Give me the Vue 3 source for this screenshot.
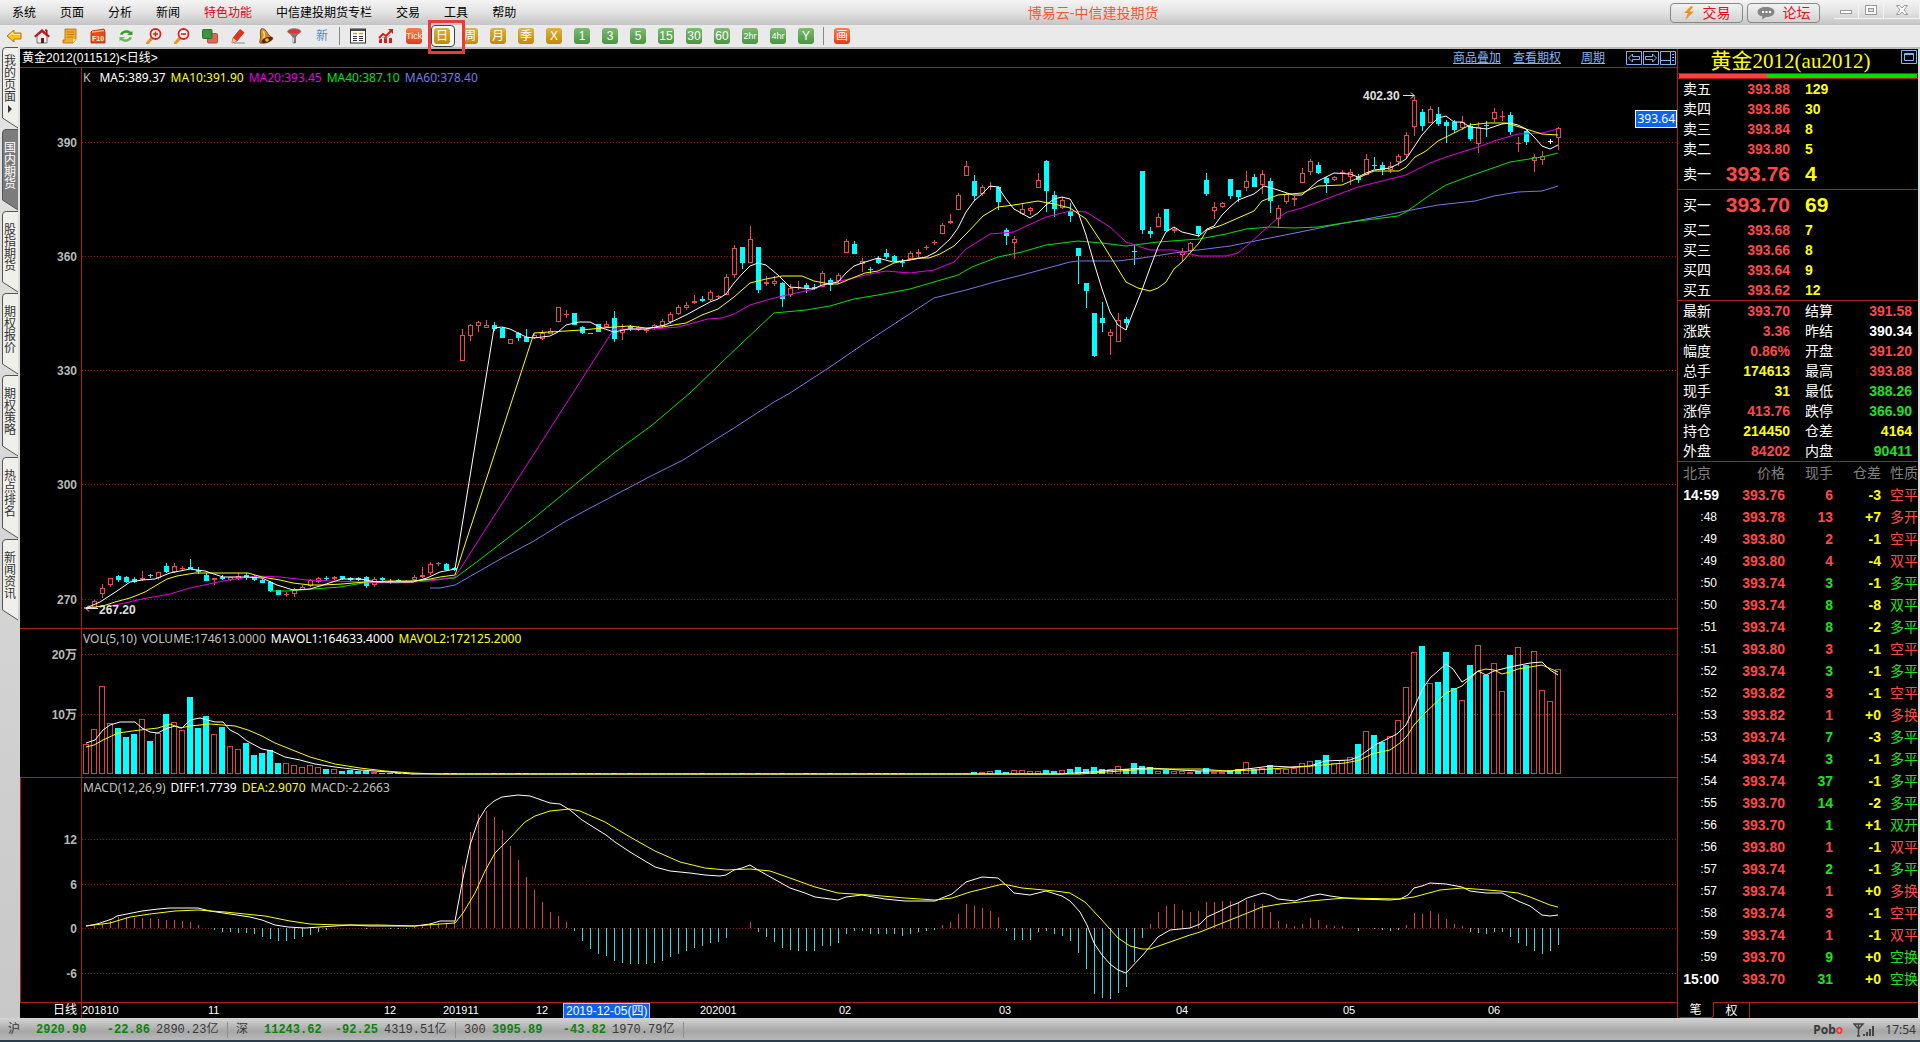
<script setup>
const menus = ['系统', '页面', '分析', '新闻', '特色功能', '中信建投期货专栏', '交易', '工具', '帮助']

const glyphs = {
  back: '<path d="M1 8 8 2v3h7v6H8v3z" fill="#fbc21e" stroke="#b07a10" stroke-width="1"/><path d="M3 8 7 4.500v2h7" fill="none" stroke="#fff0a0"/>',
  home: '<path d="M3 8v7h10V8L8 4z" fill="#f4ece6" stroke="#555" stroke-width=".8"/><path d="M11 2h2v4" fill="#8a1010" stroke="#8a1010"/><path d="M0 8 8 1l8 7-1.500 1.500L8 4 1.500 9.500z" fill="#c41420"/><path d="M7 10h3v5H7z" fill="#5a2020"/>',
  note: '<path d="M3 1h11v10l-3 4H1V12h2z" fill="#f0ac28" stroke="#a86c10" stroke-width=".8"/><path d="M5 4h7M5 6.500h7M5 9h6" stroke="#c07c10"/><path d="M11 15v-4h3z" fill="#fde08c"/>',
  f10: '<path d="M2 3 14 1l1 3v11H1V4z" fill="#e84c18" stroke="#a02808" stroke-width=".8"/><path d="M2 4 14 2.500" stroke="#ffb070" stroke-width="1.500"/><text x="8" y="12.500" font-size="7" font-weight="700" font-family="Liberation Sans, sans-serif" text-anchor="middle" fill="#fff0d0">F10</text>',
  refresh: '<path d="M2 6.500C3 2.500 10 .5 13 4l1.500-1v4H9l2-1.500C9 4 5.500 4.500 4.500 7z" fill="#3d9c30"/><path d="M14 9.500c-1 4-8 6-11 2.500l-1.500 1V9H7l-2 1.500c2 1.500 5.500 1 6.500-1.500z" fill="#6fb850"/>',
  zoomin: '<path d="m6 10-4.500 5" stroke="#e09a20" stroke-width="3" stroke-linecap="round"/><circle cx="9.500" cy="6" r="5" fill="#fff3f0" stroke="#d8201c" stroke-width="1.800"/><path d="M7 6h5M9.500 3.500v5" stroke="#d8201c" stroke-width="1.600"/>',
  zoomout: '<path d="m6 10-4.500 5" stroke="#e09a20" stroke-width="3" stroke-linecap="round"/><circle cx="9.500" cy="6" r="5" fill="#fff3f0" stroke="#d8201c" stroke-width="1.800"/><path d="M7 6h5" stroke="#d8201c" stroke-width="1.600"/>',
  copy: '<rect x="5.500" y="5.500" width="10" height="9.500" rx="1" fill="#e06858" stroke="#c84838"/><rect x=".5" y="1.500" width="9.500" height="9" rx="1" fill="#3c9440" stroke="#2a6e2c"/>',
  pencil: '<path d="m3 10 7-8.500 4 3L7 13l-5 2z" fill="#e83020" stroke="#9c1008" stroke-width=".6"/><path d="m3 10 4 3-5 2z" fill="#f4c890"/><path d="M4 15h11" stroke="#888"/>',
  bell: '<path d="M3 1c3-1 5 1 7 5 1.500 2 3 3 5 4-1 3-7 6-13 5-1-2 1-4 .5-7C2.500 5 2 3 3 1z" fill="#d88c28" stroke="#6a3808" stroke-width=".8"/><ellipse cx="9" cy="12" rx="5.800" ry="2.600" transform="rotate(-20 9 12)" fill="#5c2808"/><circle cx="9" cy="12" r="1.800" fill="#f8c040"/><path d="M5 3c2 2 1.500 4 1 7" stroke="#ffdf80" fill="none" stroke-width="1.500"/>',
  funnel: '<path d="M2 3 7 9v6h2.500V9l5-6z" fill="#777" stroke="#555" stroke-width=".6"/><ellipse cx="8.200" cy="3.500" rx="6.500" ry="2.800" fill="#e03038" stroke="#888"/><path d="M7.500 9.500v5" stroke="#ddd"/>',
  table: '<rect x=".5" y="1" width="15" height="14" fill="#fff" stroke="#333"/><path d="M1 2h14" stroke="#4a4a4a" stroke-width="2"/><path d="M3 5.500h4M9 5.500h4" stroke="#d0a010" stroke-width="1.500"/><path d="M3 8.500h4M9 8.500h4M3 10.500h4M9 10.500h4M3 12.500h4M9 12.500h4" stroke="#333"/>',
  chart: '<path d="M1 15v-4h3v4zM6 15V9h3v6zM11 15v-5h3v5z" fill="#d81c10"/><path d="M1 10 5 6l3 2 6-6" fill="none" stroke="#d81c10" stroke-width="2"/><path d="M10 1h5v5z" fill="#d81c10"/><path d="M1 12l4-3 3 1.500 5-4" stroke="#50a8e0" fill="none" stroke-width=".8"/>'
}
const tools = [
  ...['back', 'home', 'note', 'f10', 'refresh', 'zoomin', 'zoomout', 'copy', 'pencil', 'bell', 'funnel'].map(g => ({ g })),
  { t: '新', c: 'plain' }, { sep: 1 }, { g: 'table' }, { g: 'chart' }, { t: 'Tick', c: 'orange slim' },
  ...['日', '周', '月', '季', 'X'].map(t => ({ t, c: 'gold', on: t === '日' })),
  ...['1', '3', '5', '15', '30', '60', '2hr', '4hr', 'Y'].map(t => ({ t, c: t.length > 2 ? 'green slim' : 'green' })),
  { sep: 1 }, { t: '画', c: 'orange' }
]

const sideTabs = ['我的页面', '国内期货', '股指期货', '期权报价', '期权策略', '热点排名', '新闻资讯']

// One entry per session: colour, high, body top, body bottom, low
const candles = `r607,607,609,609 r600,601,608,608 r584,588,594,598 r578,578,585,587 c575,576,580,582 c576,577,582,583 c577,579,582,583 r571,578,580,581 c574,575,576,578 r572,572,578,580
c563,566,572,573 r563,566,572,573 r566,568,569,571 c559,567,569,569 c567,570,572,574 c573,575,581,581 r578,578,580,585 c575,577,579,580 r577,577,580,581 r573,576,579,580
c573,575,578,580 c575,576,580,581 c579,580,583,583 c581,582,591,592 c590,590,595,595 r592,594,595,597 r588,589,594,597 r585,587,590,590 r579,580,586,587 r577,578,582,583
c576,578,579,581 r576,577,579,580 c576,576,579,580 c577,578,580,581 c577,578,580,581 c576,577,586,588 r577,579,585,587 c577,578,580,581 c579,581,582,584 c579,580,581,582
r580,581,582,583 r575,577,580,581 r567,575,577,578 r562,564,573,575 r562,563,564,566 c563,564,570,571 c567,568,570,571 r329,335,361,361 r324,325,336,341 r321,322,326,332
r320,325,328,328 c322,325,329,331 c327,328,338,338 r339,339,344,344 c332,333,338,341 c329,337,342,342 r333,335,338,339 r330,333,339,340 r328,331,334,334 r307,307,322,322
r310,314,315,318 c313,313,325,325 c326,327,333,334 c333,333,334,334 c324,324,332,332 r321,324,327,328 c311,318,339,342 r324,329,333,340 c325,326,329,331 r326,327,330,331
r328,329,331,333 r324,325,328,330 r319,321,326,328 r312,314,322,324 r305,307,314,315 r302,305,308,310 r295,301,303,304 c296,299,301,302 r290,292,300,301 r295,296,297,299
r274,277,295,295 r245,248,275,278 c247,247,263,269 r226,239,263,263 c247,247,290,293 r276,282,284,286 r276,281,284,286 c282,283,299,307 r284,288,295,297 r281,287,288,290
c283,285,288,293 c284,287,289,290 r271,273,287,287 c278,280,285,291 r273,275,281,284 r239,241,253,253 c241,244,254,254 r258,261,264,272 c267,269,270,274 c256,258,263,264
c249,253,257,259 c255,256,261,262 c259,262,263,267 r251,253,259,260 r249,252,254,257 r245,247,248,250 r240,242,243,245 r223,225,234,234 r214,221,223,224 r193,195,210,210
r161,166,176,176 c175,181,196,201 r185,187,194,196 r182,186,187,190 c186,187,202,210 c228,230,236,245 r236,239,243,259 r203,209,214,215 r207,208,211,215 r173,180,188,188
c160,161,191,212 c191,195,209,217 r197,200,208,209 c203,211,216,222 c248,248,256,284 c283,283,291,308 c313,313,356,357 c302,318,323,332 r329,332,336,355 r313,320,342,342
c317,319,323,330 c245,251,252,265 c171,171,230,234 c227,231,234,238 r213,217,227,227 c209,209,231,231 r227,229,231,233 r248,252,255,261 r242,243,251,252 c226,226,234,237
c173,180,194,196 r202,207,211,219 r202,203,207,208 c179,179,196,199 c190,190,197,202 r171,181,188,191 c174,177,187,187 r170,174,185,194 c178,181,201,213 r205,208,219,228
r193,194,202,204 r196,198,200,206 r168,173,183,183 r159,161,172,175 c162,165,173,174 c177,178,183,193 r176,177,180,181 r170,172,174,182 r169,172,177,185 c174,177,180,183
r154,159,175,175 c157,165,166,169 c162,165,170,175 r162,166,170,173 r154,156,162,166 r132,135,155,158 r95,100,127,136 c109,112,126,131 r106,109,123,123 c107,114,124,126
c120,122,126,143 c120,122,130,133 r116,122,128,130 c123,126,139,141 r122,127,144,153 c121,125,126,137 r108,112,119,122 r111,116,117,121 c112,115,132,135 r137,143,144,152
c130,131,142,145 r154,157,161,172 r151,156,160,165 w139,141,142,144 r127,128,138,150`.split(/\s+/).map(s => [s[0], ...s.slice(1).split(',').map(Number)])

const volumeHead = [30, 45, 88, 51, 46, 37, 40, 55, 33, 41, 60, 52, 44, 77, 46, 58, 40, 47, 28, 25, 31, 19, 21, 24, 11, 11, 9, 7, 9, 7, 5, 5, 3, 4, 3, 3, 2]
const volumeTail = [2, 2, 3, 4, 2, 4, 4, 3, 3, 4, 3, 4, 5, 7, 5, 7, 5, 5, 8, 5, 11, 8, 7, 3, 4, 3, 3, 2, 3, 6, 2, 2, 3, 5, 12, 5, 6, 9, 5, 5, 6, 11, 13, 14, 19, 11, 14, 17, 30, 43, 39, 32, 38, 54, 87, 122, 128, 91, 92, 122, 86, 74, 109, 129, 99, 111, 83, 119, 127, 109, 123, 84, 73, 105]
const volumes = [...volumeHead, ...Array(185 - volumeHead.length - volumeTail.length).fill(1), ...volumeTail]

const macd = [0, 2, 4, 7, 11, 11, 10, 10, 10, 9, 8, 8, 7, 6, 3, 0, -2, -4, -4, -5, -5, -6, -9, -11, -13, -13, -11, -9, -7, -4, -2, 0, 0, 0, 0, -1, 0, 0, -1, -1, -1, 1, 2, 5, 5, 5, 7,
  62, 96, 114, 117, 111, 98, 82, 68, 51, 38, 26, 16, 12, 6, -3, -13, -21, -26, -28, -33, -35, -36, -36, -36, -35, -33, -29, -26, -23, -20, -18, -15, -14, -10, 0, 0, 6, -4, -9, -14, -20, -22, -23, -23, -23, -18, -18, -15, -6, -3, -3, -6, -6, -6, -6, -8, -6, -4, -3, -2,
  3, 6, 14, 24, 22, 20, 17, 11, -3, -12, -12, -12, -4, -3, -6, -8, -13, -25, -41, -66, -70, -71, -65, -59, -34, -10, 4, 16, 22, 24, 18, 16, 17, 26, 26, 27, 27, 25, 28, 25, 24, 16, 7, 4, 2, 4, 10, 8, 3, 2, 2, 0, -3, 0, -1, -2, -3, -2, 3, 15, 14, 17, 14, 9, 4, 2, -4, -5, -6, -4, -4, -9, -15, -18, -23, -26, -23, -17]

const centre = i => 86 + 8 * i
const box = (x, y, w, h) => `M${x} ${y}h${w}v${h}h${-w}z`
const paths = { c: '', r: '', rw: '', w: '', vc: '', vr: '', vt: '', mc: '', mr: '' }
candles.forEach(([k, hi, top, bot, lo], i) => {
  const x = centre(i)
  if (k === 'c') paths.c += box(x, hi, 1, Math.max(1, lo - hi)) + box(x - 2, top, 5, Math.max(1, bot - top))
  else if (k === 'w') paths.w += box(x, hi, 1, 5) + box(x - 2, top, 5, 1)
  else {
    paths.rw += box(x, hi, 1, top - hi) + box(x, bot, 1, lo - bot)
    if (bot - top < 3) paths.rw += box(x - 2, top, 5, bot - top) + box(x, hi, 1, lo - hi)
    else paths.r += box(x - 1.5, top + 0.5, 4, bot - top - 1)
  }
  const v = volumes[i]
  if (k === 'c') paths.vc += box(x - 3, 774 - v, 6, v)
  else if (v > 2) paths.vr += box(x - 2.5, 774.5 - v, 5, v - 1)
  else paths.vt += box(x - 3, 774 - v, 6, v)
  const m = macd[i]
  if (m > 0) paths.mr += box(x, 928 - m, 1, m)
  if (m < 0) paths.mc += box(x, 928, 1, -m)
})

const lines = {
  k: [
    ['#7878e6', '430,588 440,588 455,585 504,557 534,541 566,521 594,506 636,484 647,478 683,460 702,448 734,428 774,402 790,393 830,367 862,345 908,315 934,298 950,294 966,290 998,281 1022,275 1070,262 1078,261 1118,261 1142,258 1174,253 1206,249 1230,246 1270,238 1310,230 1334,225 1382,216 1406,211 1438,205 1475,201 1494,196 1518,192 1542,191 1558,186'],
    ['#00e600', '270,591 287,591 313,589 340,587 363,583 397,582 430,580 455,578 478,561 504,541 534,518 583,478 614,453 651,426 690,393 719,365 742,343 774,313 806,310 830,306 854,299 878,295 910,289 934,282 958,275 972,267 998,257 1022,252 1046,245 1078,241 1102,243 1126,246 1158,242 1199,239 1226,234 1246,229 1270,227 1294,228 1318,227 1350,222 1382,218 1398,216 1406,212 1430,195 1446,185 1470,176 1510,162 1542,157 1558,153'],
    ['#e600e6', '110,606 125,603 142,599 170,594 190,588 223,581 243,578 257,576 280,577 307,580 333,581 363,582 397,583 430,581 455,577 614,329 638,329 654,329 678,327 708,319 722,318 734,314 750,305 774,298 814,289 830,283 854,278 865,275 886,271 910,273 934,270 954,262 966,249 990,234 1014,232 1022,228 1046,217 1070,211 1086,212 1110,227 1126,242 1150,250 1174,250 1199,256 1226,256 1238,253 1250,243 1262,232 1278,218 1287,212 1302,208 1326,199 1358,187 1390,179 1406,175 1430,163 1446,157 1478,147 1494,141 1518,134 1542,133 1558,129'],
    ['#ffff00', '86,608 103,606 115,602 130,598 145,592 155,586 167,579 177,576 195,573 222,573 248,573 262,577 280,580 293,583 310,585 323,585 342,584 365,582 390,581 413,581 430,579 440,577 455,575 534,333 550,332 582,330 602,328 614,327 630,326 646,328 662,327 686,323 702,315 718,309 734,297 750,283 766,279 782,276 802,276 814,281 830,284 838,284 850,279 865,273 878,271 894,263 918,258 929,258 940,254 954,246 967,233 983,216 998,207 1014,205 1038,201 1054,204 1070,208 1086,219 1102,243 1118,269 1126,282 1138,288 1150,291 1158,288 1166,282 1174,269 1182,262 1191,252 1199,243 1207,230 1222,225 1238,218 1254,211 1262,201 1278,195 1302,193 1318,186 1342,185 1358,178 1374,171 1399,171 1406,167 1415,157 1426,151 1438,141 1454,133 1470,125 1487,123 1506,123 1526,129 1542,134 1558,135'],
    ['#ffffff', '86,608 100,602 117,591 130,582 142,580 155,579 170,573 190,569 205,571 223,577 247,577 262,578 277,585 293,590 310,589 323,585 342,579 360,579 377,582 397,582 413,582 427,578 440,572 455,569 494,328 502,327 510,329 526,337 534,338 550,336 558,332 566,325 579,322 590,322 602,328 614,332 629,329 646,329 665,325 686,315 710,302 718,299 726,294 734,283 742,274 750,266 758,263 766,265 778,275 790,287 813,289 822,285 838,282 846,273 854,266 862,263 878,258 893,262 910,260 926,257 936,252 950,239 958,228 966,212 974,201 983,193 990,186 998,187 1006,199 1014,209 1030,218 1038,213 1046,205 1054,199 1062,197 1070,199 1078,212 1086,235 1094,263 1102,289 1110,312 1118,325 1126,330 1134,310 1142,290 1150,268 1158,247 1166,232 1174,227 1182,232 1199,236 1207,229 1214,226 1222,215 1230,207 1238,200 1254,194 1264,186 1278,190 1293,195 1302,195 1310,188 1318,181 1334,173 1350,174 1358,177 1366,173 1374,170 1390,168 1398,164 1406,159 1414,147 1422,135 1430,126 1438,118 1446,116 1454,122 1462,122 1470,127 1478,128 1487,129 1502,124 1510,123 1518,125 1526,129 1534,137 1542,146 1550,149 1558,145']
  ],
  v: [
    ['#ffffff', '86,743 95,740 103,730 110,725 120,722 135,722 142,728 150,732 158,733 165,729 175,726 182,728 190,720 200,718 215,722 223,722 230,730 238,734 247,741 262,749 272,751 285,757 300,760 315,764 335,767 360,770 390,772 412,774 1060,774 1090,772 1113,770 1130,769 1150,768 1180,770 1200,771 1230,771 1255,768 1270,766 1290,767 1310,766 1325,761 1350,760 1360,756 1375,745 1397,734 1406,725 1414,708 1422,690 1430,678 1446,664 1453,669 1462,682 1470,677 1478,671 1486,675 1494,671 1510,667 1530,663 1542,662 1550,670 1558,675'],
    ['#ffff00', '86,747 94,745 103,740 118,733 140,730 158,728 170,724 180,728 190,726 210,724 235,726 248,730 262,736 275,743 290,749 310,757 335,764 360,768 385,771 412,773 440,774 1080,774 1120,771 1150,769 1200,769 1225,771 1255,770 1300,767 1345,763 1360,760 1372,754 1390,750 1400,743 1407,736 1414,725 1424,714 1446,693 1462,686 1478,671 1486,669 1494,670 1502,674 1510,672 1518,669 1542,665 1558,672']
  ],
  m: [
    ['#ffffff', '86,926 97,924 112,919 117,916 127,914 142,911 158,909 170,908 198,908 210,911 230,914 250,917 262,920 275,925 288,927 305,928 320,927 350,925 370,926 390,926 415,926 430,924 440,921 455,921 463,878 470,845 478,821 486,808 494,801 502,797 518,795 530,796 550,803 560,804 570,810 582,820 598,830 606,835 615,842 630,852 655,867 670,871 690,873 705,875 720,876 726,875 734,870 742,868 750,865 758,870 774,879 790,888 805,893 815,897 838,900 846,897 862,895 885,899 905,901 935,901 942,898 952,894 966,882 982,877 998,878 1006,885 1014,893 1030,895 1046,891 1062,896 1070,901 1080,912 1087,925 1094,943 1102,955 1110,964 1118,970 1126,973 1142,956 1158,937 1170,930 1190,928 1200,924 1207,917 1220,911 1230,906 1238,903 1247,898 1263,893 1270,895 1278,899 1287,900 1295,901 1310,896 1320,894 1330,896 1345,898 1358,899 1390,900 1400,899 1408,895 1414,888 1422,886 1430,883 1446,884 1462,887 1470,891 1486,893 1502,893 1518,901 1530,906 1542,915 1550,916 1558,915'],
    ['#ffff00', '86,926 110,923 130,917 150,914 175,911 198,910 225,912 245,914 265,916 290,921 310,924 340,925 380,925 415,926 440,924 455,923 463,913 475,893 485,871 495,853 510,838 525,822 535,816 550,811 570,809 580,811 605,822 630,837 655,851 680,862 705,868 726,870 750,869 770,871 790,878 815,887 838,893 870,895 905,898 935,900 952,898 970,892 1003,884 1022,888 1055,891 1070,893 1085,902 1100,918 1118,938 1130,946 1142,949 1150,949 1170,942 1190,935 1200,932 1225,922 1245,914 1262,907 1280,904 1310,901 1345,898 1400,899 1414,897 1440,890 1462,888 1500,891 1518,893 1530,897 1550,905 1558,907']
  ]
}

const X0 = 82
const W = 1595
const panels = [
  {
    id: 'k', y: 68, h: 560, lines: lines.k,
    ticks: [['390', 142], ['360', 256], ['330', 370], ['300', 484], ['270', 599]],
    legend: [['K', '#c0c0c0'], ['MA5:389.37', '#fff'], ['MA10:391.90', '#ff0'], ['MA20:393.45', '#e600e6'], ['MA40:387.10', '#00e600'], ['MA60:378.40', '#7878e6']],
    shapes: [['fill', '#00ffff', paths.c], ['fill', '#f04848', paths.rw], ['stroke', '#f04848', paths.r], ['fill', '#fff', paths.w]]
  },
  {
    id: 'v', y: 629, h: 148, lines: lines.v,
    ticks: [['20万', 654], ['10万', 714]],
    legend: [['VOL(5,10)', '#c0c0c0'], ['VOLUME:174613.0000', '#c0c0c0'], ['MAVOL1:164633.4000', '#fff'], ['MAVOL2:172125.2000', '#ff0']],
    shapes: [['fill', '#00ffff', paths.vc], ['stroke', '#d84444', paths.vr], ['fill', '#d84444', paths.vt]]
  },
  {
    id: 'm', y: 778, h: 224, lines: lines.m,
    ticks: [['12', 839], ['6', 884], ['0', 928], ['-6', 973]],
    legend: [['MACD(12,26,9)', '#c0c0c0'], ['DIFF:1.7739', '#fff'], ['DEA:2.9070', '#ff0'], ['MACD:-2.2663', '#c0c0c0']],
    shapes: [['fill', '#38d8d8', paths.mc], ['fill', '#d84444', paths.mr]]
  }
]
const topOf = (p, y) => ({ top: ((y - p.y) / p.h) * 100 + '%' })
const leftOf = x => ({ left: ((x - X0) / W) * 100 + '%' })

const dates = [['201810', 82], ['11', 208], ['12', 384], ['201911', 443], ['12', 536], ['202001', 700], ['02', 839], ['03', 999], ['04', 1176], ['05', 1343], ['06', 1488]]

const asks = [['卖五', '393.88', '129'], ['卖四', '393.86', '30'], ['卖三', '393.84', '8'], ['卖二', '393.80', '5'], ['卖一', '393.76', '4']]
const bids = [['买一', '393.70', '69'], ['买二', '393.68', '7'], ['买三', '393.66', '8'], ['买四', '393.64', '9'], ['买五', '393.62', '12']]
const facts = [
  ['最新', '393.70', 'r', '结算', '391.58', 'r'], ['涨跌', '3.36', 'r', '昨结', '390.34', 'w'],
  ['幅度', '0.86%', 'r', '开盘', '391.20', 'r'], ['总手', '174613', 'y', '最高', '393.88', 'r'],
  ['现手', '31', 'y', '最低', '388.26', 'g'], ['涨停', '413.76', 'r', '跌停', '366.90', 'g'],
  ['持仓', '214450', 'y', '仓差', '4164', 'y'], ['外盘', '84202', 'r', '内盘', '90411', 'g']
]
const trades = `14:59 393.76 6 -3 空平 r|:48 393.78 13 +7 多开 r|:49 393.80 2 -1 空平 r|:49 393.80 4 -4 双平 r|:50 393.74 3 -1 多平 g|:50 393.74 8 -8 双平 g|:51 393.74 8 -2 多平 g|:51 393.80 3 -1 空平 r|:52 393.74 3 -1 多平 g|:52 393.82 3 -1 空平 r|:53 393.82 1 +0 多换 r|:53 393.74 7 -3 多平 g|:54 393.74 3 -1 多平 g|:54 393.74 37 -1 多平 g|:55 393.70 14 -2 多平 g|:56 393.70 1 +1 双开 g|:56 393.80 1 -1 双平 r|:57 393.74 2 -1 多平 g|:57 393.74 1 +0 多换 r|:58 393.74 3 -1 空平 r|:59 393.74 1 -1 双平 r|:59 393.70 9 +0 空换 g|15:00 393.70 31 +0 空换 g`.split('|').map(s => s.split(' '))

const indices = [['沪', '2920.90', '-22.86', '2890.23亿'], ['深', '11243.62', '-92.25', '4319.51亿'], ['300', '3995.89', '-43.82', '1970.79亿']]
</script>

<template>
  <div class="app">
    <header class="menubar">
      <nav class="menus">
        <button v-for="m in menus" :key="m" type="button" :class="{ hot: m === '特色功能' }">{{ m }}</button>
      </nav>
      <h1 class="apptitle">博易云-中信建投期货</h1>
      <div class="winside">
        <button type="button" class="pill">
          <svg width="12" height="14" viewBox="0 0 12 14"><path d="M8 0 1 7h4l-3 7 9-8.500H6.500L10 1z" fill="#f09020" /></svg>交易
        </button>
        <button type="button" class="pill">
          <svg width="18" height="14" viewBox="0 0 18 14"><path d="M9 1c5 0 8.500 2 8.500 5s-3.500 5-8.500 5l-4 2.500.5-3C2.500 10 .5 8.500.5 6 .5 3 4 1 9 1z" fill="#858585" /><path d="M5 6h2M8.500 6h2M12 6h2" stroke="#fff" stroke-width="2" /></svg>论坛
        </button>
        <div class="winbtns">
          <button type="button" aria-label="最小化"><svg width="14" height="14"><rect x="1.500" y="7.500" width="11" height="3" fill="#fff" stroke="#999" /></svg></button>
          <button type="button" aria-label="最大化"><svg width="14" height="14"><rect x="1.500" y="2.500" width="11" height="9" fill="#fff" stroke="#999" /><rect x="4.500" y="5.500" width="5" height="3" fill="#ddd" stroke="#999" /></svg></button>
          <button type="button" class="wide" aria-label="关闭"><svg width="14" height="14"><path d="M1.500 2.500h3L7 5l2.500-2.500h3L9 7l3.500 4.500h-3L7 9l-2.500 2.500h-3L5 7z" fill="#fff" stroke="#999" /></svg></button>
        </div>
      </div>
    </header>

    <div class="toolbar">
      <template v-for="(t, i) in tools" :key="i">
        <span v-if="t.sep" class="sep"></span>
        <button v-else type="button" class="tool" :class="{ on: t.on }">
          <svg v-if="t.g" width="16" height="16" viewBox="0 0 16 16" v-html="glyphs[t.g]"></svg>
          <span v-else class="badge" :class="t.c">{{ t.t }}</span>
          <span v-if="t.on" class="marker"></span>
        </button>
      </template>
    </div>

    <main class="body">
      <aside class="side">
        <button v-for="(s, i) in sideTabs" :key="s" type="button" class="sidetab" :class="{ on: i === 1 }">
          <svg class="tabshape" width="16" height="82" viewBox="0 0 16 82"><path d="M16 .5H4Q.5.5.5 4v67L16 81" /></svg>
          <span class="sidelabel">{{ s }}</span>
          <span v-if="i === 0" class="tri"></span>
        </button>
      </aside>

      <section class="charts">
        <div class="charthead">
          <span>黄金2012(011512)&lt;日线&gt;</span>
          <div class="links">
            <a href="#">商品叠加</a><a href="#">查看期权</a><a href="#" class="far">周期</a>
            <span class="boxes">
              <button type="button" aria-label="左移"><svg width="16" height="14"><path d="M.5.5h15v13H.5zM2.500 7l4-4v2.500h7v3h-7V11z" /></svg></button>
              <button type="button" aria-label="右移"><svg width="16" height="14"><path d="M.5.5h15v13H.5zM13.500 7l-4-4v2.500h-7v3h7V11z" /></svg></button>
              <button type="button" aria-label="布局"><svg width="16" height="14"><path d="M.5.5h15v13H.5zM.5 9.500h10M10.500 1v12M12 3.500h2M12 6.500h2M12 9.500h2" /></svg></button>
            </span>
          </div>
        </div>

        <div v-for="p in panels" :key="p.id" class="panel" :class="p.id" :style="{ flexGrow: p.h }">
          <div class="axis">
            <span v-for="[t, y] in p.ticks" :key="t" class="tick" :style="topOf(p, y)">{{ t }}</span>
          </div>
          <div class="plot">
            <svg class="canvas" :viewBox="`${X0} ${p.y} ${W} ${p.h}`" preserveAspectRatio="none">
              <path v-for="[t, y] in p.ticks" :key="t" class="grid" :d="`M${X0} ${y + 0.5}H${X0 + W}`" />
              <path v-for="([mode, col, d], i) in p.shapes" :key="i" class="crisp" :fill="mode === 'fill' ? col : 'none'" :stroke="mode === 'stroke' ? col : 'none'" :d="d" />
              <polyline v-for="[col, pts] in p.lines" :key="col" class="curve" :stroke="col" :points="pts" />
              <path v-if="p.id === 'k'" class="arrow" d="M1403 95.500h11M1411 92.500l3 3-3 3M86 608.500h12M89 605.500l-3 3 3 3" />
            </svg>
            <div class="legend"><span v-for="[t, c] in p.legend" :key="t" :style="{ color: c }">{{ t }}</span></div>
            <template v-if="p.id === 'k'">
              <span class="mark" :style="{ ...leftOf(1363), ...topOf(p, 96) }">402.30</span>
              <span class="mark" :style="{ ...leftOf(99), ...topOf(p, 610) }">267.20</span>
              <span class="pricetag" :style="topOf(p, 119)">393.64</span>
            </template>
          </div>
        </div>

        <div class="dates">
          <span class="period">日线</span>
          <div class="track">
            <span v-for="([t, x], i) in dates" :key="i" class="date" :style="leftOf(x)">{{ t }}</span>
            <span class="datetag" :style="leftOf(563)">2019-12-05(四)</span>
          </div>
        </div>
      </section>

      <section class="quote">
        <div class="qtitle">
          <h2>黄金2012(au2012)</h2>
          <button type="button" class="expand" aria-label="展开"><svg width="16" height="14"><path d="M.5.500h15v13H.5zM3.500 3.500h9v7h-9zM3.500 4.500h9" /></svg></button>
        </div>
        <div class="ratio"><span></span></div>
        <table class="book">
          <tbody>
            <tr v-for="[n, p, v] in asks" :key="n" :class="{ best: n === '卖一' }"><th scope="row">{{ n }}</th><td class="r">{{ p }}</td><td class="y vol">{{ v }}</td></tr>
          </tbody>
        </table>
        <table class="book">
          <tbody>
            <tr v-for="[n, p, v] in bids" :key="n" :class="{ best: n === '买一' }"><th scope="row">{{ n }}</th><td class="r">{{ p }}</td><td class="y vol">{{ v }}</td></tr>
          </tbody>
        </table>
        <table class="facts">
          <tbody>
            <tr v-for="f in facts" :key="f[0]"><th>{{ f[0] }}</th><td :class="f[2]">{{ f[1] }}</td><th class="second">{{ f[3] }}</th><td class="last" :class="f[5]">{{ f[4] }}</td></tr>
          </tbody>
        </table>
        <table class="trades">
          <thead>
            <tr><th class="place">北京</th><th>价格</th><th>现手</th><th>仓差</th><th>性质</th></tr>
          </thead>
          <tbody>
            <tr v-for="(t, i) in trades" :key="i">
              <td class="time" :class="{ full: t[0].length > 3 }">{{ t[0] }}</td><td class="r">{{ t[1] }}</td><td :class="t[5]">{{ t[2] }}</td><td class="y">{{ t[3] }}</td><td class="kind" :class="t[5]">{{ t[4] }}</td>
            </tr>
          </tbody>
        </table>
        <div class="qtabs">
          <button type="button" class="on">笔</button><button type="button">权</button><span class="rest"></span>
        </div>
      </section>
    </main>

    <footer class="status">
      <div v-for="x in indices" :key="x[0]" class="index">
        <span class="iname">{{ x[0] }}</span><b class="ival">{{ x[1] }}</b><b class="idelta">{{ x[2] }}</b><span class="iamt">{{ x[3] }}</span>
      </div>
      <div class="sysinfo">
        <b class="pobo">Pob<i>o</i></b>
        <svg width="22" height="14" viewBox="0 0 22 14"><path d="M1 1h9L5.500 6zM5.500 1v12M4 13h3" fill="none" stroke="#444" stroke-width="1.500" /><path d="M10 11h2v2h-2zM13 9h2v4h-2zM16 6h2v7h-2zM19 3h2v10h-2z" fill="#444" /></svg>
        <span class="clock">17:54</span>
      </div>
    </footer>
  </div>
</template>

<style>
body {
  margin: 0;
  background: #000;
}
</style>

<style scoped>
.app {
  display: flex;
  flex-direction: column;
  min-height: 100vh;
  background: #dcdcdc;
  font-family: "Liberation Sans", "Noto Sans CJK SC", sans-serif;
  font-size: 12px;
  line-height: 16px;
  color: #000;
}
button {
  margin: 0;
  padding: 0;
  border: 0;
  background: none;
  font: inherit;
  color: inherit;
}
table {
  border-collapse: separate;
  border-spacing: 0;
  table-layout: fixed;
  width: 100%;
}
th, td {
  padding: 0;
  font-weight: 400;
}

.menubar {
  display: flex;
  align-items: center;
  height: 25px;
  background: linear-gradient(#f4f4f4, #e2e2e2 50%, #c4c4c4);
}
.menus {
  display: flex;
  gap: 24px;
  padding-left: 12px;
  white-space: nowrap;
}
.hot {
  color: #e00020;
}
.apptitle {
  flex: 1;
  margin: 0;
  font-size: 14px;
  font-weight: 400;
  text-align: center;
  color: #f05a30;
}
.winside {
  display: flex;
  align-items: center;
  gap: 4px;
}
.pill {
  display: flex;
  align-items: center;
  justify-content: center;
  gap: 8px;
  box-sizing: border-box;
  width: 73px;
  height: 20px;
  border: 1px solid #888;
  border-radius: 4px;
  background: linear-gradient(#f2f2f2, #d2d2d2);
  font-size: 14px;
  color: #e01018;
}
.winbtns {
  display: flex;
  align-self: flex-start;
  height: 16px;
  margin-left: 10px;
}
.winbtns button {
  width: 25px;
  border: solid #f4f4f4;
  border-width: 0 1px 1px 0;
}
.winbtns .wide {
  width: 36px;
}

.toolbar {
  display: flex;
  align-items: center;
  height: 22px;
  border-bottom: 2px solid #bcbcbc;
  background: #eaeaea;
}
.tool {
  position: relative;
  display: flex;
  justify-content: center;
  align-items: center;
  width: 28px;
  height: 22px;
}
.tool.on::before {
  content: "";
  position: absolute;
  inset: 0 1px 0 3px;
  border: 1px solid #444;
  border-radius: 4px;
  background: #f8f8f8;
}
.marker {
  position: absolute;
  z-index: 2;
  inset: -5px -9px -7px 0;
  border: 3px solid #ec3a3a;
}
.sep {
  width: 1px;
  height: 18px;
  margin: 0 4px 0 3px;
  background: #888;
}
.badge {
  position: relative;
  width: 16px;
  height: 16px;
  border-radius: 3px;
  font-size: 12px;
  line-height: 16px;
  text-align: center;
  color: #fff;
}
.gold {
  background: linear-gradient(#dcb43c, #c08a08);
}
.green {
  background: linear-gradient(#7cbc70, #4a9444);
}
.orange {
  background: linear-gradient(#f88048, #e03c18);
}
.slim {
  font-size: 9px;
}
.plain {
  color: #4a90d8;
}

.body {
  display: flex;
  flex: 1;
  padding-right: 2px;
}
.side {
  display: flex;
  flex-direction: column;
  width: 18px;
  margin-top: -2px;
  padding-left: 2px;
  background: linear-gradient(#e4e4e4, #c8c8c8);
}
.sidetab {
  position: relative;
  display: flex;
  flex-direction: column;
  align-items: center;
  justify-content: center;
  box-sizing: border-box;
  width: 16px;
  height: 82px;
  padding-bottom: 8px;
}
.tabshape {
  position: absolute;
  inset: 0;
  fill: #f0f0ea;
  stroke: #555;
}
.sidelabel {
  position: relative;
  width: 12px;
  line-height: 12px;
  word-break: break-all;
  color: #333;
}
.sidetab.on .tabshape {
  fill: #7c7c7c;
}
.sidetab.on .sidelabel {
  color: #fff;
}
.tri {
  position: relative;
  margin-top: 2px;
  border: solid transparent;
  border-width: 4px 0 4px 4px;
  border-left-color: #333;
}

.charts {
  display: flex;
  flex: 1;
  flex-direction: column;
  min-width: 0;
  background: #000;
  color: #fff;
}
.charthead {
  display: flex;
  justify-content: space-between;
  align-items: center;
  height: 18px;
  padding-left: 2px;
  border-bottom: 1px solid #b01c1c;
}
.links {
  display: flex;
  align-items: center;
  gap: 12px;
}
.links a {
  color: #80b4f4;
}
.links .far {
  margin: 0 9px 0 8px;
}
.boxes {
  display: flex;
  gap: 1px;
  padding-right: 1px;
}
.boxes svg, .expand svg {
  display: block;
  fill: none;
  stroke: #80b4f4;
}
.panel {
  display: flex;
  flex-basis: 0;
  border-bottom: 1px solid #b01c1c;
}
.axis {
  position: relative;
  width: 61px;
  border-right: 1px solid #b01c1c;
}
.panel.m .axis {
  box-sizing: border-box;
  width: 62px;
  border-left: 1px solid #b01c1c;
}
.tick {
  position: absolute;
  right: 4px;
  margin-top: -7px;
  font-weight: 700;
  color: #b8b8b8;
}
.plot {
  position: relative;
  flex: 1;
}
.canvas {
  position: absolute;
  width: 100%;
  height: 100%;
}
.grid {
  stroke: #981818;
  stroke-dasharray: 1 2;
  shape-rendering: crispEdges;
}
.crisp {
  shape-rendering: crispEdges;
}
.curve {
  fill: none;
  vector-effect: non-scaling-stroke;
}
.arrow {
  fill: none;
  stroke: #e0e0e0;
}
.legend {
  position: relative;
  display: flex;
  gap: 5px;
  padding: 2px 0 0 1px;
  font-family: "Noto Sans", sans-serif;
}
.panel.k .legend span:first-child {
  margin-right: 4px;
}
.mark {
  position: absolute;
  margin-top: -8px;
  font-weight: 700;
  color: #e0e0e0;
}
.pricetag {
  position: absolute;
  right: 0;
  margin-top: -9px;
  padding: 0 1px;
  border: 1px solid #fff;
  background: #0a62f4;
  font-family: "Noto Sans", sans-serif;
  font-size: 12px;
}
.dates {
  display: flex;
  height: 15px;
  font-size: 11px;
  line-height: 15px;
}
.period {
  width: 57px;
  padding-right: 4px;
  border-right: 1px solid #b01c1c;
  font-size: 12px;
  text-align: right;
}
.track {
  position: relative;
  flex: 1;
}
.date {
  position: absolute;
}
.datetag {
  position: absolute;
  padding: 0 2px;
  border: 1px solid #a0c8ff;
  border-bottom: 0;
  background: #0a62f4;
  font-size: 12px;
  line-height: 14px;
}

.quote {
  display: flex;
  flex-direction: column;
  width: 240px;
  border-left: 1px solid #b01c1c;
  background: #000;
  font-size: 14px;
  color: #fff;
}
.qtitle {
  position: relative;
  display: flex;
  justify-content: center;
  align-items: center;
  height: 24px;
  padding-right: 15px;
  border-bottom: 1px solid #b01c1c;
}
.qtitle h2 {
  margin: 0;
  font: 400 21px/24px "Liberation Serif", "Noto Sans CJK SC", serif;
  color: #ff0;
}
.expand {
  position: absolute;
  top: 1px;
  right: 1px;
}
.ratio {
  display: flex;
  height: 4px;
  padding: 0 1px;
  border-bottom: 1px solid #b01c1c;
}
.ratio::after {
  content: "";
  flex: 1;
  background: #00e000;
}
.ratio span {
  width: 37%;
  background: #ff4040;
}
.r { color: #ff4848; }
.g { color: #20e020; }
.y { color: #ff0; }
.w { color: #fff; }
.book, .facts {
  border-bottom: 1px solid #b01c1c;
}
.book tr, .facts tr {
  height: 20px;
}
.book tr.best {
  height: 30px;
}
.book th, .facts th {
  width: 36px;
  padding-left: 5px;
  box-sizing: border-box;
  text-align: left;
}
.book td, .facts td {
  width: 76px;
  font-weight: 700;
  text-align: right;
}
.book .vol {
  width: 113px;
  padding-left: 15px;
  text-align: left;
}
.book .best td {
  font-size: 21px;
}
.facts .second {
  width: 48px;
  padding-left: 15px;
}
.facts .last {
  width: 74px;
  padding-right: 6px;
}
.trades {
  margin-bottom: 12px;
}
.trades tr {
  height: 22px;
}
.trades th {
  text-align: right;
  color: #808080;
}
.trades .place {
  box-sizing: border-box;
  width: 41px;
  padding-left: 5px;
  text-align: left;
}
.trades th:nth-child(2) { width: 66px; }
.trades th:nth-child(3) { width: 48px; }
.trades th:nth-child(4) { width: 48px; }
.trades th:nth-child(5) { width: 37px; }
.trades td {
  font-weight: 700;
  text-align: right;
}
.trades .time {
  padding-right: 2px;
  font-size: 12px;
  font-weight: 400;
}
.trades .time.full {
  padding-right: 0;
  font-size: 14px;
  font-weight: 700;
}
.trades .kind {
  font-weight: 400;
}
.qtabs {
  display: flex;
  height: 16px;
  margin-top: auto;
  font-size: 12px;
  line-height: 14px;
}
.qtabs button {
  box-sizing: border-box;
  width: 36px;
  border-top: 1px solid #b01c1c;
  border-right: 1px solid #b01c1c;
}
.qtabs .on {
  border-top: 0;
  border-bottom: 1px solid #b01c1c;
  border-radius: 0 0 3px 3px;
}
.rest {
  flex: 1;
  border-top: 1px solid #b01c1c;
}

.status {
  display: flex;
  align-items: center;
  height: 20px;
  padding: 2px 0 0 8px;
  border-bottom: 2px solid #2c3c4a;
  background: linear-gradient(#d4d4d4, #a6a6a6 60%, #b8b8b8);
  font-family: "Liberation Mono", "Noto Sans CJK SC", monospace;
  color: #383838;
}
.index {
  display: flex;
  box-sizing: border-box;
  width: 220px;
  margin-right: 8px;
  border-right: 1px solid #909090;
  white-space: nowrap;
}
.iname {
  width: 28px;
}
.ival {
  width: 65px;
  color: #108010;
}
.idelta {
  flex: 1;
  padding-right: 6px;
  text-align: right;
  color: #108010;
}
.iamt {
  width: 71px;
}
.sysinfo {
  display: flex;
  flex: 1;
  justify-content: flex-end;
  align-items: center;
  gap: 10px;
  padding-right: 4px;
  font-family: "Noto Sans", sans-serif;
}
.pobo {
  font-size: 12px;
}
.pobo i {
  font-style: normal;
  color: #f03838;
}
.clock {
  font-size: 12px;
}
</style>
